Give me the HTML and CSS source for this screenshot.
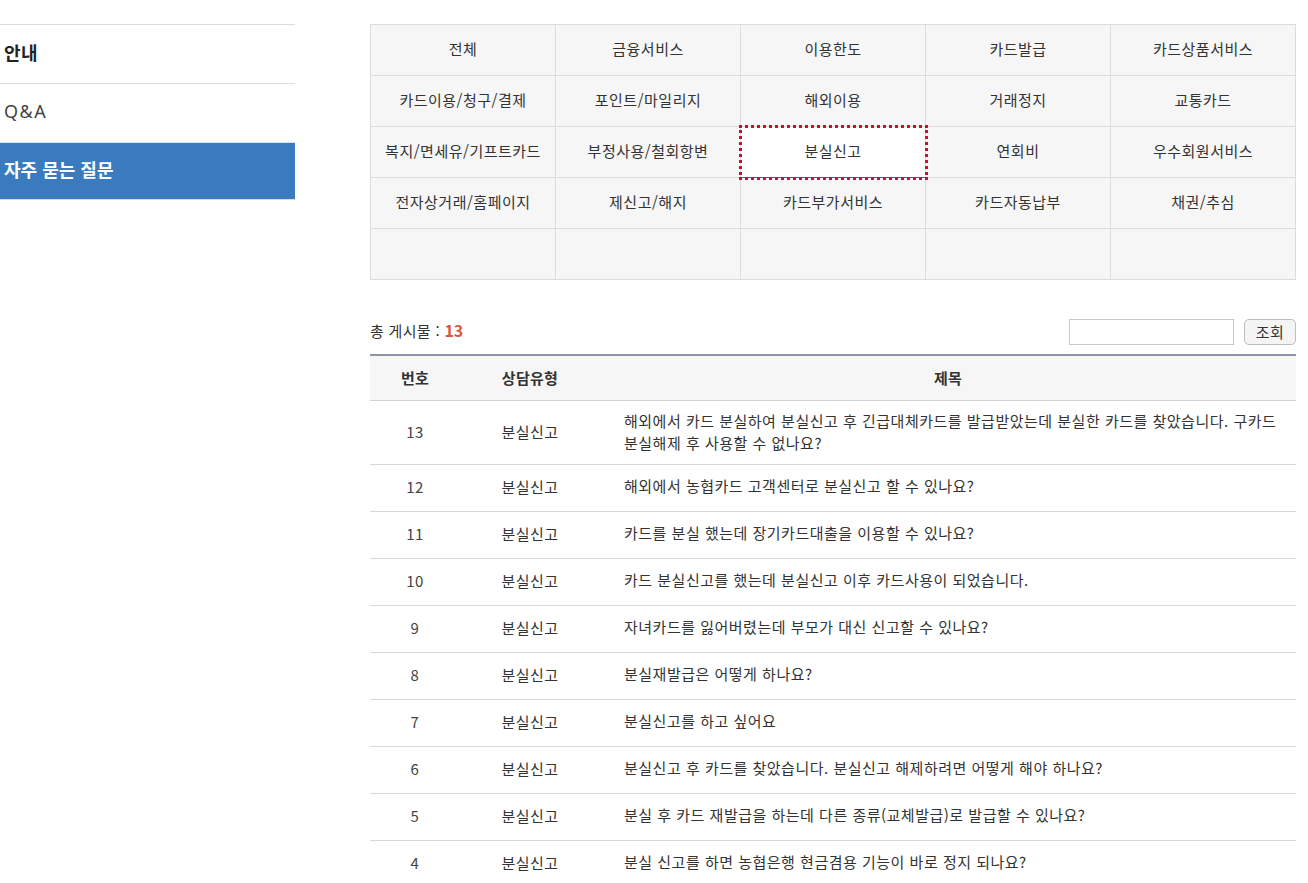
FILE: index.html
```html
<!DOCTYPE html>
<html lang="ko">
<head>
<meta charset="utf-8">
<title>자주 묻는 질문</title>
<link rel="stylesheet" href="styles.css">
</head>
<body>
<div class="page">
  <nav class="side">
    <ul class="side-menu">
      <li class="side-item bold">안내</li>
      <li class="side-item latin">Q&amp;A</li>
      <li class="side-item active">자주 묻는 질문</li>
    </ul>
  </nav>
  <main class="content">
    <table class="cats">
      <tr><td>전체</td><td>금융서비스</td><td>이용한도</td><td>카드발급</td><td>카드상품서비스</td></tr>
      <tr><td>카드이용/청구/결제</td><td>포인트/마일리지</td><td>해외이용</td><td>거래정지</td><td>교통카드</td></tr>
      <tr><td>복지/면세유/기프트카드</td><td>부정사용/철회항변</td><td class="sel">분실신고</td><td>연회비</td><td>우수회원서비스</td></tr>
      <tr><td>전자상거래/홈페이지</td><td>제신고/해지</td><td>카드부가서비스</td><td>카드자동납부</td><td>채권/추심</td></tr>
      <tr><td></td><td></td><td></td><td></td><td></td></tr>
    </table>

    <div class="toolbar">
      <div class="total">총 게시물 : <strong>13</strong></div>
      <div class="search">
        <input type="text" class="search-input" aria-label="검색어">
        <button type="button" class="search-btn">조회</button>
      </div>
    </div>

    <table class="list">
      <colgroup><col class="c-no"><col class="c-type"><col></colgroup>
      <thead>
        <tr><th>번호</th><th>상담유형</th><th>제목</th></tr>
      </thead>
      <tbody>
        <tr><td class="num">13</td><td class="type">분실신고</td><td class="title two">해외에서 카드 분실하여 분실신고 후 긴급대체카드를 발급받았는데 분실한 카드를 찾았습니다. 구카드 분실해제 후 사용할 수 없나요?</td></tr>
        <tr><td class="num">12</td><td class="type">분실신고</td><td class="title">해외에서 농협카드 고객센터로 분실신고 할 수 있나요?</td></tr>
        <tr><td class="num">11</td><td class="type">분실신고</td><td class="title">카드를 분실 했는데 장기카드대출을 이용할 수 있나요?</td></tr>
        <tr><td class="num">10</td><td class="type">분실신고</td><td class="title">카드 분실신고를 했는데 분실신고 이후 카드사용이 되었습니다.</td></tr>
        <tr><td class="num">9</td><td class="type">분실신고</td><td class="title">자녀카드를 잃어버렸는데 부모가 대신 신고할 수 있나요?</td></tr>
        <tr><td class="num">8</td><td class="type">분실신고</td><td class="title">분실재발급은 어떻게 하나요?</td></tr>
        <tr><td class="num">7</td><td class="type">분실신고</td><td class="title">분실신고를 하고 싶어요</td></tr>
        <tr><td class="num">6</td><td class="type">분실신고</td><td class="title">분실신고 후 카드를 찾았습니다. 분실신고 해제하려면 어떻게 해야 하나요?</td></tr>
        <tr><td class="num">5</td><td class="type">분실신고</td><td class="title">분실 후 카드 재발급을 하는데 다른 종류(교체발급)로 발급할 수 있나요?</td></tr>
        <tr><td class="num">4</td><td class="type">분실신고</td><td class="title">분실 신고를 하면 농협은행 현금겸용 기능이 바로 정지 되나요?</td></tr>
      </tbody>
    </table>
  </main>
</div>
</body>
</html>
```

FILE: styles.css
```css
* { box-sizing: border-box; }
html, body { margin: 0; padding: 0; background: #fff; }
body {
  font-family: "Noto Sans CJK KR", "Noto Sans", sans-serif;
  color: #333;
  font-size: 15px;
}
.page {
  display: flex;
  align-items: flex-start;
  padding-top: 24px;
}
.side {
  width: 295px;
  flex: none;
}
.side-menu {
  list-style: none;
  margin: 0;
  padding: 0;
  border-top: 1px solid #dcdcdc;
}
.side-item {
  height: 59px;
  border-bottom: 1px solid #dcdcdc;
  display: flex;
  align-items: center;
  padding-left: 4px;
  padding-bottom: 4px;
  font-size: 18px;
  color: #333;
}
.side-item.bold { font-weight: 700; color: #222; letter-spacing: 0.5px; }
.side-item.latin {
  font-family: "Noto Sans", sans-serif;
  font-weight: 400;
  letter-spacing: 1.5px;
  color: #444;
}
.side-item.active {
  background: #3a7bbf;
  color: #fff;
  font-weight: 700;
  letter-spacing: 0;
  height: 58px;
  margin-top: -1px;
  border-top: 1px solid #d7e4f2;
}
.content {
  margin-left: 75px;
  width: 926px;
  flex: none;
}
.cats {
  width: 926px;
  border-collapse: collapse;
  table-layout: fixed;
  background: #f6f6f6;
}
.cats td {
  border: 1px solid #dcdcdc;
  height: 51px;
  text-align: center;
  vertical-align: middle;
  font-size: 15px;
  letter-spacing: 0.5px;
  color: #333;
  padding: 0 2px 4px;
}
.cats td.sel {
  background: #fff;
  outline: 3px dotted #c8102e;
  outline-offset: -1px;
  border-left: 1px solid #4a6b8f;
  border-bottom: 1px solid #4a6b8f;
}
.toolbar {
  display: flex;
  justify-content: space-between;
  align-items: center;
  margin-top: 39px;
  height: 26px;
}
.total {
  font-size: 15px;
  letter-spacing: 0.3px;
  color: #333;
  padding-bottom: 4px;
}
.total strong {
  color: #d9583b;
  font-size: 16px;
  font-weight: 700;
  letter-spacing: 0;
}
.search {
  display: flex;
  align-items: center;
  gap: 10px;
}
.search-input {
  width: 165px;
  height: 26px;
  border: 1px solid #c8c8c8;
  margin: 0;
  padding: 0 4px;
  background: #fff;
}
.search-btn {
  width: 52px;
  height: 26px;
  border: 1px solid #bdbdbd;
  border-radius: 5px;
  background: #f4f4f4;
  font-family: "Noto Sans CJK KR", sans-serif;
  font-size: 15px;
  letter-spacing: 0.5px;
  color: #333;
  padding: 0;
  margin: 0;
  line-height: 24px;
}
.list {
  width: 926px;
  margin-top: 9px;
  border-collapse: collapse;
  table-layout: fixed;
  border-top: 2px solid #8c97a4;
}
.c-no { width: 90px; }
.c-type { width: 140px; }
.list th {
  background: #f6f6f6;
  height: 45px;
  font-weight: 700;
  font-size: 15px;
  color: #333;
  letter-spacing: 0.3px;
  border-bottom: 1px solid #cfd3d7;
  text-align: center;
}
.list td {
  border-bottom: 1px solid #d6d9dc;
  height: 47px;
  font-size: 15px;
  color: #333;
  letter-spacing: 0.5px;
  vertical-align: middle;
  padding-bottom: 3px;
}
.list td.num, .list td.type { text-align: center; }
.list td.num { letter-spacing: 0.5px; color: #444; }
.list td.title {
  padding: 0 16px 3px 24px;
  line-height: 22px;
  text-align: left;
}
.list td.title.two {
  padding-top: 9px;
  padding-bottom: 10px;
}
```
